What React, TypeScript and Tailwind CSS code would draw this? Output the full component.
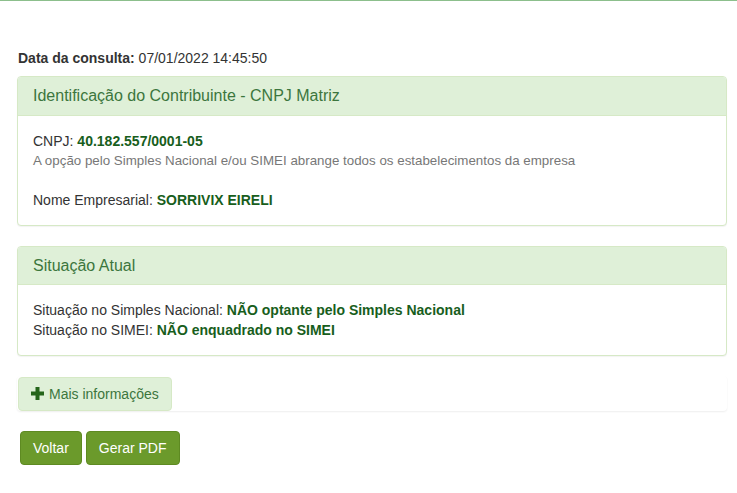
const panelBorder = 'border-[#d6e9c6]';

const Panel = ({ title, children }: { title: string; children: React.ReactNode }) => (
  <section className={`mb-5 rounded-[4px] border ${panelBorder} bg-white shadow-[0_1px_1px_rgba(0,0,0,0.05)]`}>
    <header className={`rounded-t-[3px] border-b ${panelBorder} bg-[#dff0d8] px-[15px] py-[10px] text-[16px] leading-[17.6px] text-[#3c763d]`}>
      {title}
    </header>
    <div className="p-[15px]">{children}</div>
  </section>
);

const Strong = ({ children }: { children: React.ReactNode }) => (
  <b className="font-bold text-[#185e1c]">{children}</b>
);

const PlusIcon = () => (
  <svg width="13" height="13" viewBox="0 0 13 13" aria-hidden="true" className="mr-[5px] inline-block align-[-1px]">
    <rect x="4.5" y="0" width="4" height="13" fill="#25651a" />
    <rect x="0" y="4.5" width="13" height="4" fill="#25651a" />
  </svg>
);

export default function App() {
  return (
    <div className="min-h-screen bg-white font-['Liberation_Sans',Arial,sans-serif] text-[14px] leading-[20px] text-[#333]">
      <div className="h-px bg-[#8cbf8c]" />

      <main className="pl-[17px] pr-[10px] pt-[47px]">
        <p className="mb-[8px] pl-px">
          <b className="font-bold">Data da consulta:</b> 07/01/2022 14:45:50
        </p>

        <Panel title="Identificação do Contribuinte - CNPJ Matriz">
          <p>
            CNPJ: <Strong>40.182.557/0001-05</Strong>
          </p>
          <p className="text-[13.35px] leading-[19px] text-[#777]">
            A opção pelo Simples Nacional e/ou SIMEI abrange todos os estabelecimentos da empresa
          </p>
          <br />
          <p>
            Nome Empresarial: <Strong>SORRIVIX EIRELI</Strong>
          </p>
        </Panel>

        <Panel title="Situação Atual">
          <p>
            Situação no Simples Nacional: <Strong>NÃO optante pelo Simples Nacional</Strong>
          </p>
          <p>
            Situação no SIMEI: <Strong>NÃO enquadrado no SIMEI</Strong>
          </p>
        </Panel>

        <div className="mb-5 rounded-[4px] pt-px shadow-[0_1px_2px_rgba(0,0,0,0.07)]">
          <button className={`ml-px rounded-[4px] border ${panelBorder} bg-[#dff0d8] px-3 py-[6px] text-[#3c763d]`}>
            <PlusIcon />
            Mais informações
          </button>
        </div>

        <div className="flex gap-1 pl-[3px]">
          <button className="rounded-[4px] border border-[#5e8a22] bg-[#6b9a2b] px-3 py-[6px] text-white">Voltar</button>
          <button className="rounded-[4px] border border-[#5e8a22] bg-[#6b9a2b] px-3 py-[6px] text-white">Gerar PDF</button>
        </div>
      </main>
    </div>
  );
}
